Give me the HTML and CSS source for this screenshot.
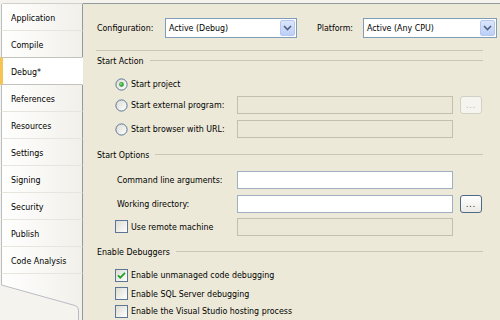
FILE: index.html
```html
<!DOCTYPE html>
<html lang="en">
<head>
    <meta charset="UTF-8">
    <title>Debug - Project Properties</title>
    <link rel="stylesheet" href="styles.css">
</head>
<body>
    <div class="window">

        <!-- Side tabs -->
        <div class="tabs">
            <ul class="tab-list">
                <li class="tab">Application</li>
                <li class="tab">Compile</li>
                <li class="tab active">Debug*</li>
                <li class="tab">References</li>
                <li class="tab">Resources</li>
                <li class="tab">Settings</li>
                <li class="tab">Signing</li>
                <li class="tab">Security</li>
                <li class="tab">Publish</li>
                <li class="tab">Code Analysis</li>
            </ul>
            <div class="tab-foot">
                <svg width="82" height="46" viewBox="0 0 82 46">
                    <defs>
                        <linearGradient id="footFill" x1="0" y1="0" x2="1" y2="0">
                            <stop offset="0" stop-color="#ffffff"/>
                            <stop offset="1" stop-color="#f1f0ea"/>
                        </linearGradient>
                    </defs>
                    <path d="M1.5 0 V11 L75 31.5 Q78.5 32.5 78.5 36 V46 H82 V0 Z" fill="url(#footFill)"/>
                    <path d="M1.5 0 V11 L75 31.5 Q78.5 32.5 78.5 36 V46" fill="none" stroke="#b9bdc3" stroke-width="1"/>
                </svg>
            </div>
        </div>

        <!-- Debug page -->
        <div class="panel">
            <div class="config-row">
                <span class="config-label">Configuration:</span>
                <div class="select config-select">
                    <span class="select-value">Active (Debug)</span>
                    <span class="select-btn">
                        <svg width="9" height="6" viewBox="0 0 9 6"><path d="M1 1 L4.5 4.5 L8 1" fill="none" stroke="#4d6185" stroke-width="1.6"/></svg>
                    </span>
                </div>
                <span class="platform-label">Platform:</span>
                <div class="select platform-select">
                    <span class="select-value">Active (Any CPU)</span>
                    <span class="select-btn">
                        <svg width="9" height="6" viewBox="0 0 9 6"><path d="M1 1 L4.5 4.5 L8 1" fill="none" stroke="#4d6185" stroke-width="1.6"/></svg>
                    </span>
                </div>
            </div>

            <div class="rule"></div>

            <!-- Start Action -->
            <div class="group-title title-action">Start Action</div>

            <div class="row row-project">
                <span class="option">
                    <svg class="radio" width="13" height="13" viewBox="0 0 13 13">
                        <defs>
                            <linearGradient id="radioFill" x1="0" y1="0" x2="1" y2="1">
                                <stop offset="0" stop-color="#dcdbd2"/>
                                <stop offset="1" stop-color="#ffffff"/>
                            </linearGradient>
                        </defs>
                        <circle cx="6.5" cy="6.5" r="5.6" fill="url(#radioFill)" stroke="#5d7597"/>
                        <circle cx="6.5" cy="6.5" r="2.4" fill="#3aa73a"/>
                        <circle cx="6" cy="6" r="1" fill="#8fd88f"/>
                    </svg>
                    Start project
                </span>
            </div>

            <div class="row row-external">
                <span class="option cell">
                    <svg class="radio" width="13" height="13" viewBox="0 0 13 13">
                        <circle cx="6.5" cy="6.5" r="5.6" fill="url(#radioFill)" stroke="#5d7597"/>
                    </svg>
                    Start external program:
                </span>
                <span class="field disabled"></span>
                <span class="browse disabled">...</span>
            </div>

            <div class="row row-url">
                <span class="option cell">
                    <svg class="radio" width="13" height="13" viewBox="0 0 13 13">
                        <circle cx="6.5" cy="6.5" r="5.6" fill="url(#radioFill)" stroke="#5d7597"/>
                    </svg>
                    Start browser with URL:
                </span>
                <span class="field disabled"></span>
            </div>

            <!-- Start Options -->
            <div class="group-title title-options">Start Options</div>

            <div class="row row-args">
                <span class="label cell">Command line arguments:</span>
                <span class="field"></span>
            </div>

            <div class="row row-workdir">
                <span class="label cell">Working directory:</span>
                <span class="field"></span>
                <span class="browse">...</span>
            </div>

            <div class="row row-remote">
                <span class="option cell">
                    <svg class="check" width="13" height="13" viewBox="0 0 13 13">
                        <defs>
                            <linearGradient id="checkFill" x1="0" y1="0" x2="1" y2="1">
                                <stop offset="0" stop-color="#dcdbd2"/>
                                <stop offset="1" stop-color="#ffffff"/>
                            </linearGradient>
                        </defs>
                        <rect x="0.5" y="0.5" width="12" height="12" fill="url(#checkFill)" stroke="#5d7597"/>
                    </svg>
                    Use remote machine
                </span>
                <span class="field disabled"></span>
            </div>

            <!-- Enable Debuggers -->
            <div class="group-title title-debuggers">Enable Debuggers</div>

            <div class="row check-row row-unmanaged">
                <span class="option">
                    <svg class="check" width="13" height="13" viewBox="0 0 13 13">
                        <rect x="0.5" y="0.5" width="12" height="12" fill="url(#checkFill)" stroke="#5d7597"/>
                        <path d="M3 6.3 L5.3 8.7 L10 3.9" fill="none" stroke="#21a121" stroke-width="1.8"/>
                    </svg>
                    Enable unmanaged code debugging
                </span>
            </div>

            <div class="row check-row row-sql">
                <span class="option">
                    <svg class="check" width="13" height="13" viewBox="0 0 13 13">
                        <rect x="0.5" y="0.5" width="12" height="12" fill="url(#checkFill)" stroke="#5d7597"/>
                    </svg>
                    Enable SQL Server debugging
                </span>
            </div>

            <div class="row check-row row-hosting">
                <span class="option">
                    <svg class="check" width="13" height="13" viewBox="0 0 13 13">
                        <rect x="0.5" y="0.5" width="12" height="12" fill="url(#checkFill)" stroke="#5d7597"/>
                    </svg>
                    Enable the Visual Studio hosting process
                </span>
            </div>
        </div>
    </div>
</body>
</html>
```

FILE: styles.css
```css
/* Reset */
* {
    margin: 0;
    padding: 0;
    box-sizing: border-box;
}

body {
    font-family: "DejaVu Sans Condensed", "DejaVu Sans", Tahoma, sans-serif;
    font-size: 8.8px;
    color: #000;
    background-color: #f4f3ee;
    width: 500px;
    height: 320px;
    overflow: hidden;
}

.window {
    display: flex;
    height: 320px;
}

/* Side tabs */
.tabs {
    width: 83px;
    display: flex;
    flex-direction: column;
    padding-top: 3px;
}

.tab-list {
    list-style: none;
    margin-left: 1px;
    border-top: 1px solid #cfd0cc;
    border-top-left-radius: 3px;
}

.tab {
    height: 27px;
    display: flex;
    align-items: center;
    padding-left: 9px;
    padding-top: 1px;
    background: linear-gradient(to right, #ffffff, #f1f0ea);
    border-left: 1px solid #b9bdc3;
    border-bottom: 1px solid #e6e5de;
    border-right: 1px solid #919b9c;
}

.tab.active {
    background: #fff;
    border-left: 3px solid #f6c453;
    margin-left: -1px;
    padding-left: 8px;
    border-bottom-color: #c3c3bb;
    border-right-color: #fff;
    margin-top: -1px;
    height: 28px;
    border-top: 1px solid #c3c3bb;
}

.tab-foot {
    flex: 1;
    border-right: 1px solid #919b9c;
    overflow: hidden;
}

.tab-foot svg {
    display: block;
}

/* Page panel */
.panel {
    flex: 1;
    margin-top: 3px;
    border-top: 1px solid #919b9c;
    background-color: #ece9d8;
    padding: 14px 0 0 13px;
    display: flex;
    flex-direction: column;
}

.config-row {
    display: flex;
    align-items: center;
    height: 20px;
}

.config-label {
    width: 69px;
    padding-left: 1px;
}

.platform-label {
    width: 46px;
    margin-left: 20px;
}

.select {
    height: 20px;
    display: flex;
    align-items: center;
    background: #fff;
    border: 1px solid #7f9db9;
}

.config-select {
    width: 132px;
}

.platform-select {
    width: 134px;
}

.select-value {
    flex: 1;
    padding-left: 3px;
}

.select-btn {
    width: 15px;
    height: 16px;
    margin-right: 1px;
    display: flex;
    align-items: center;
    justify-content: center;
    background: linear-gradient(#dce6fb, #bccff7);
    border: 1px solid #b6c8f0;
    border-radius: 2px;
}

.rule {
    width: 387px;
    height: 1px;
    margin-top: 12px;
    background-color: #cac7b6;
}

/* Group titles with the etched line */
.group-title {
    width: 387px;
    height: 14px;
    display: flex;
    align-items: center;
    padding-left: 1px;
}

.group-title::after {
    content: "";
    flex: 1;
    height: 1px;
    margin-left: 6px;
    background-color: #cac7b6;
}

.title-action {
    margin-top: 3px;
}

.title-options {
    margin-top: 10px;
}

.title-debuggers {
    margin-top: 9px;
}

/* Rows */
.row {
    display: flex;
    align-items: center;
    height: 18px;
}

.cell {
    width: 141px;
}

.option {
    display: flex;
    align-items: center;
    padding-left: 19px;
}

.option svg {
    margin-right: 3px;
    flex-shrink: 0;
}

.label {
    padding-left: 21px;
}

.row-project {
    margin-top: 8px;
}

.row-external {
    margin-top: 3px;
}

.row-url {
    margin-top: 6px;
}

.row-args {
    margin-top: 9px;
}

.row-workdir {
    margin-top: 6px;
}

.row-remote {
    margin-top: 5px;
}

.row-unmanaged {
    margin-top: 8px;
}

.row-sql {
    margin-top: 1px;
}

.field {
    width: 216px;
    height: 18px;
    background: #fff;
    border: 1px solid #9fb0c2;
}

.field.disabled {
    background: #ebe8d7;
    border-color: #c2bfae;
}

.browse {
    width: 22px;
    height: 18px;
    margin-left: 7px;
    display: flex;
    align-items: flex-end;
    justify-content: center;
    padding-bottom: 3px;
    font-size: 8px;
    letter-spacing: 1px;
    line-height: 1;
    border: 1px solid #4e6a85;
    border-radius: 3px;
    background: linear-gradient(#ffffff, #ebeae4);
}

.browse.disabled {
    color: #b3b0a2;
    border-color: #d2d0c4;
    background: #f5f4ef;
}
```
